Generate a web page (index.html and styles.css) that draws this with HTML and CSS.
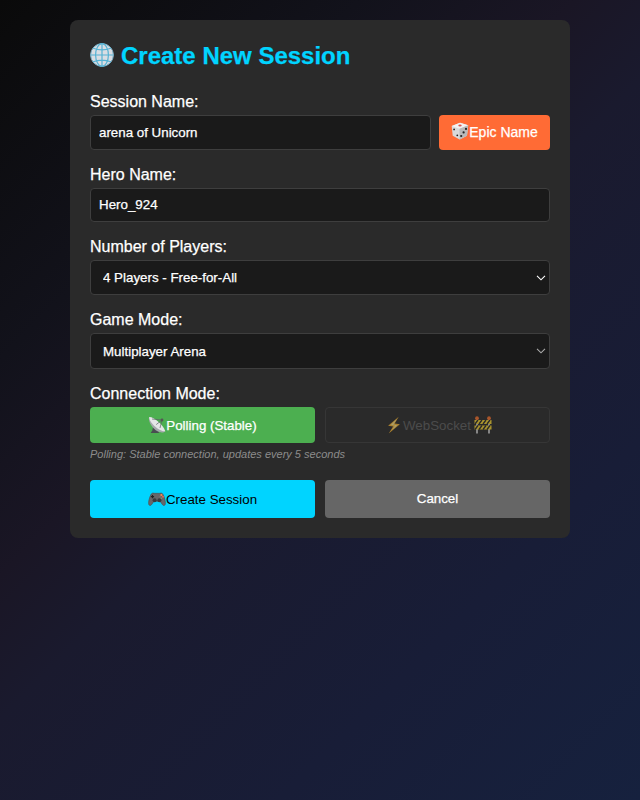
FILE: index.html
```html
<!DOCTYPE html>
<html lang="en">
<head>
<meta charset="utf-8">
<title>Create New Session</title>
<link rel="stylesheet" href="styles.css">
</head>
<body>
<main class="modal">
  <h2 class="title">
    <svg class="globe" viewBox="0 0 24 24"><circle cx="12" cy="12" r="11.4" fill="#d9dde3" stroke="#76acc4" stroke-width="1"/><g fill="none" stroke="#55b2d3" stroke-width="1.2"><path d="M12 .6v22.8M.6 12h22.8M3.2 5.2q8.8 3.4 17.6 0M3.2 18.8q8.8-3.4 17.6 0"/><ellipse cx="12" cy="12" rx="6.4" ry="11.4"/></g></svg>
    <span>Create New Session</span>
  </h2>
  <section class="field field-session">
    <label for="session">Session Name:</label>
    <div class="row">
      <input id="session" type="text" value="arena of Unicorn">
      <button class="btn epic"><svg class="icon" viewBox="0 0 18 18"><path d="M.7 4 9 .7 17.2 3.3 16 13.8 8.7 17.5 1.7 13.7z" fill="#d9d9d9"/><path d="M.7 4 9 .7 17.2 3.3 8.5 6.7z" fill="#f2f2f2"/><path d="M8.5 6.7 17.2 3.3 16 13.8 8.7 17.5z" fill="#b9b9b9"/><ellipse cx="9" cy="3.5" rx="1.7" ry=".9" fill="#d9544f"/><g fill="#222"><circle cx="3.1" cy="7.4" r=".9"/><circle cx="6.3" cy="13.3" r=".9"/><circle cx="15" cy="6.9" r="1.1"/><circle cx="12.6" cy="10.4" r="1.1"/><circle cx="10.2" cy="14" r="1.1"/></g></svg><span>Epic Name</span></button>
    </div>
  </section>
  <section class="field field-hero">
    <label for="hero">Hero Name:</label>
    <input id="hero" type="text" value="Hero_924">
  </section>
  <section class="field field-players">
    <label for="players">Number of Players:</label>
    <div class="select"><select id="players"><option>4 Players - Free-for-All</option></select><svg class="chevron" viewBox="0 0 10 6"><path d="M1 .8 5 4.8 9 .8"/></svg></div>
  </section>
  <section class="field field-mode">
    <label for="mode">Game Mode:</label>
    <div class="select dim"><select id="mode"><option>Multiplayer Arena</option></select><svg class="chevron" viewBox="0 0 10 6"><path d="M1 .8 5 4.8 9 .8"/></svg></div>
  </section>
  <section class="field field-connection">
    <label>Connection Mode:</label>
    <div class="pair">
      <button class="btn polling"><svg class="icon" viewBox="0 0 18 18"><path d="M5.5 9 4.3 14.6 2.6 17h8.6l-1.6-2.6L9.5 10z" fill="#494d51"/><path d="M1.2 1C-.3 5 4 12.3 9.5 15.3c3.2 1.6 6.3 1.4 7.8-.1z" fill="#a5a9ac"/><path d="M1.2 1C5.1.5 15.3 8.5 17.3 15.2 12.5 16 1.3 7.6 1.2 1z" fill="#e4e6e7"/><path d="M8.2 8.6 14 4M12 12 14 4M4 3l10 1" stroke="#5c6064" stroke-width=".7"/><circle cx="14" cy="4" r="1.4" fill="#555"/></svg><span>Polling (Stable)</span></button>
      <button class="btn websocket" disabled><svg class="icon bolt" viewBox="0 0 18 18"><path d="M13.7.7 3.1 9.8l5 .6-4.4 7 11.2-9.1-5.2-.8z" fill="#ffba32"/><path d="m11.8 3-6 5.9 4.2.6-3.1 4.7 5.3-5-4-.6z" fill="#fff09b"/></svg><span>WebSocket</span><svg class="icon barrier" viewBox="0 0 18 18"><path d="M3 3v14.6M15 3v14.6" stroke="#d5d5d5" stroke-width="1.8"/><path d="M.5 4h17v4H.5zM.5 9.5h17v4H.5z" fill="#ffdb30"/><path d="m1 8 3-4m1 4 3-4m1 4 3-4m1 4 3-4M1 13.5l3-4m1 4 3-4m1 4 3-4m1 4 3-4" stroke="#292929" stroke-width="1.3"/><circle cx="3" cy="2.2" r="1.9" fill="#ff742b"/><circle cx="15" cy="2.2" r="1.9" fill="#ff742b"/></svg></button>
    </div>
    <p class="note">Polling: Stable connection, updates every 5 seconds</p>
  </section>
  <div class="pair actions">
    <button class="btn create"><svg class="icon" viewBox="0 0 18 18"><path d="M3.2 4Q4.5 2.5 6.5 3.3h5Q13.5 2.5 14.8 4C16.5 7 18 12.5 17.2 14.5c-.7 1.7-2.4 1-3.2-.5L12 11.2H6L4 14c-.8 1.5-2.5 2.2-3.2.5C0 12.5 1.5 7 3.2 4z" fill="#66676a" stroke="#4b4c4e" stroke-width=".6"/><circle cx="6.6" cy="10.3" r="2" fill="#3a3b3e"/><circle cx="11.4" cy="10.3" r="2" fill="#3a3b3e"/><path d="M4.5 5v3.2M2.9 6.6h3.2" stroke="#222" stroke-width="1.1"/><circle cx="13.4" cy="5" r="1.1" fill="#ff8a50"/><circle cx="15" cy="6.7" r="1" fill="#ee674c"/><circle cx="12" cy="6.7" r=".8" fill="#85736b"/><circle cx="13.4" cy="8.3" r=".8" fill="#87966c"/></svg><span>Create Session</span></button>
    <button class="btn cancel">Cancel</button>
  </div>
</main>
</body>
</html>
```
FILE: styles.css
```css
* { box-sizing: border-box; }
body {
  margin: 0;
  min-height: 800px;
  padding-top: 20px;
  background: linear-gradient(135deg, #0a0a0a 0%, #12121b 25%, #1a1625 40%, #1a1a2e 50%, #181d37 75%, #16213e 100%);
  color: #fff;
  font-family: "Liberation Sans", Arial, sans-serif;
  -webkit-text-stroke: .25px;
}
.modal {
  width: 500px;
  height: 517.5px;
  margin: 0 auto;
  padding: 20px;
  border-radius: 8px;
  background: #2a2a2a;
}
.title {
  display: flex;
  align-items: center;
  gap: 7px;
  height: 30px;
  margin: 0 0 22px;
  color: #00d4ff;
  font-size: 24px;
  line-height: 30px;
}
.title span { padding-top: 2px; }
.globe { width: 24px; height: 24px; }
.field label {
  display: block;
  height: 23px;
  font-size: 16px;
  line-height: 19px;
}
.field-session { height: 73px; }
.field-hero { height: 72px; }
.field-players { height: 73px; }
.field-mode { height: 74px; }
.field-connection { height: 96px; }
.row { display: flex; gap: 8px; }
input, select {
  display: block;
  width: 100%;
  height: 34.5px;
  border: 1px solid #3e3e3e;
  border-radius: 4px;
  background: #1a1a1a;
  color: #fff;
  font: 13.333px "Liberation Sans", Arial, sans-serif;
  -webkit-text-stroke: .25px;
}
input { padding: 0 8px; }
#hero { height: 33.5px; }
.row input { flex: 1; min-width: 0; }
select { padding: 0 12px; appearance: none; }
.select { position: relative; }
.dim select { height: 35.5px; padding-top: 1.5px; }
.chevron {
  position: absolute;
  right: 4px;
  top: 15px;
  width: 10px;
  height: 6px;
  fill: none;
  stroke: #fff;
  stroke-width: 1.1;
}
.dim .chevron { stroke: #aaa; }
.btn {
  display: flex;
  align-items: center;
  justify-content: center;
  padding: 0;
  border: 0;
  border-radius: 4px;
  color: #fff;
  font: 13.333px "Liberation Sans", Arial, sans-serif;
  -webkit-text-stroke: .25px;
}
.icon { flex: none; width: 18px; height: 18px; }
.epic { width: 111px; height: 34.5px; background: #ff6b35; font-size: 14px; }
.epic .icon { position: relative; top: -1px; }
.pair { display: grid; grid-template-columns: 1fr 1fr; gap: 10px; }
.polling, .websocket { height: 35.5px; }
.polling { background: #4caf50; }
.polling span, .websocket span { padding-top: 1px; }
.websocket {
  border: 1px solid #363636;
  background: transparent;
  color: #4c4c4c;
  -webkit-text-stroke: 0;
}
.websocket .icon { opacity: .6; }
.websocket .barrier { margin-left: 3px; }
.websocket .bolt { margin-left: 2px; }
.note {
  margin: 5px 0 0;
  color: #8c8c8c;
  font-size: 11px;
  font-style: italic;
  line-height: 13px;
  -webkit-text-stroke: 0;
}
.actions .btn { height: 37.5px; }
.create { background: #00d4ff; color: #000; -webkit-text-stroke: 0; }
.create span { padding-top: 1px; }
.cancel { background: #666; }
```
